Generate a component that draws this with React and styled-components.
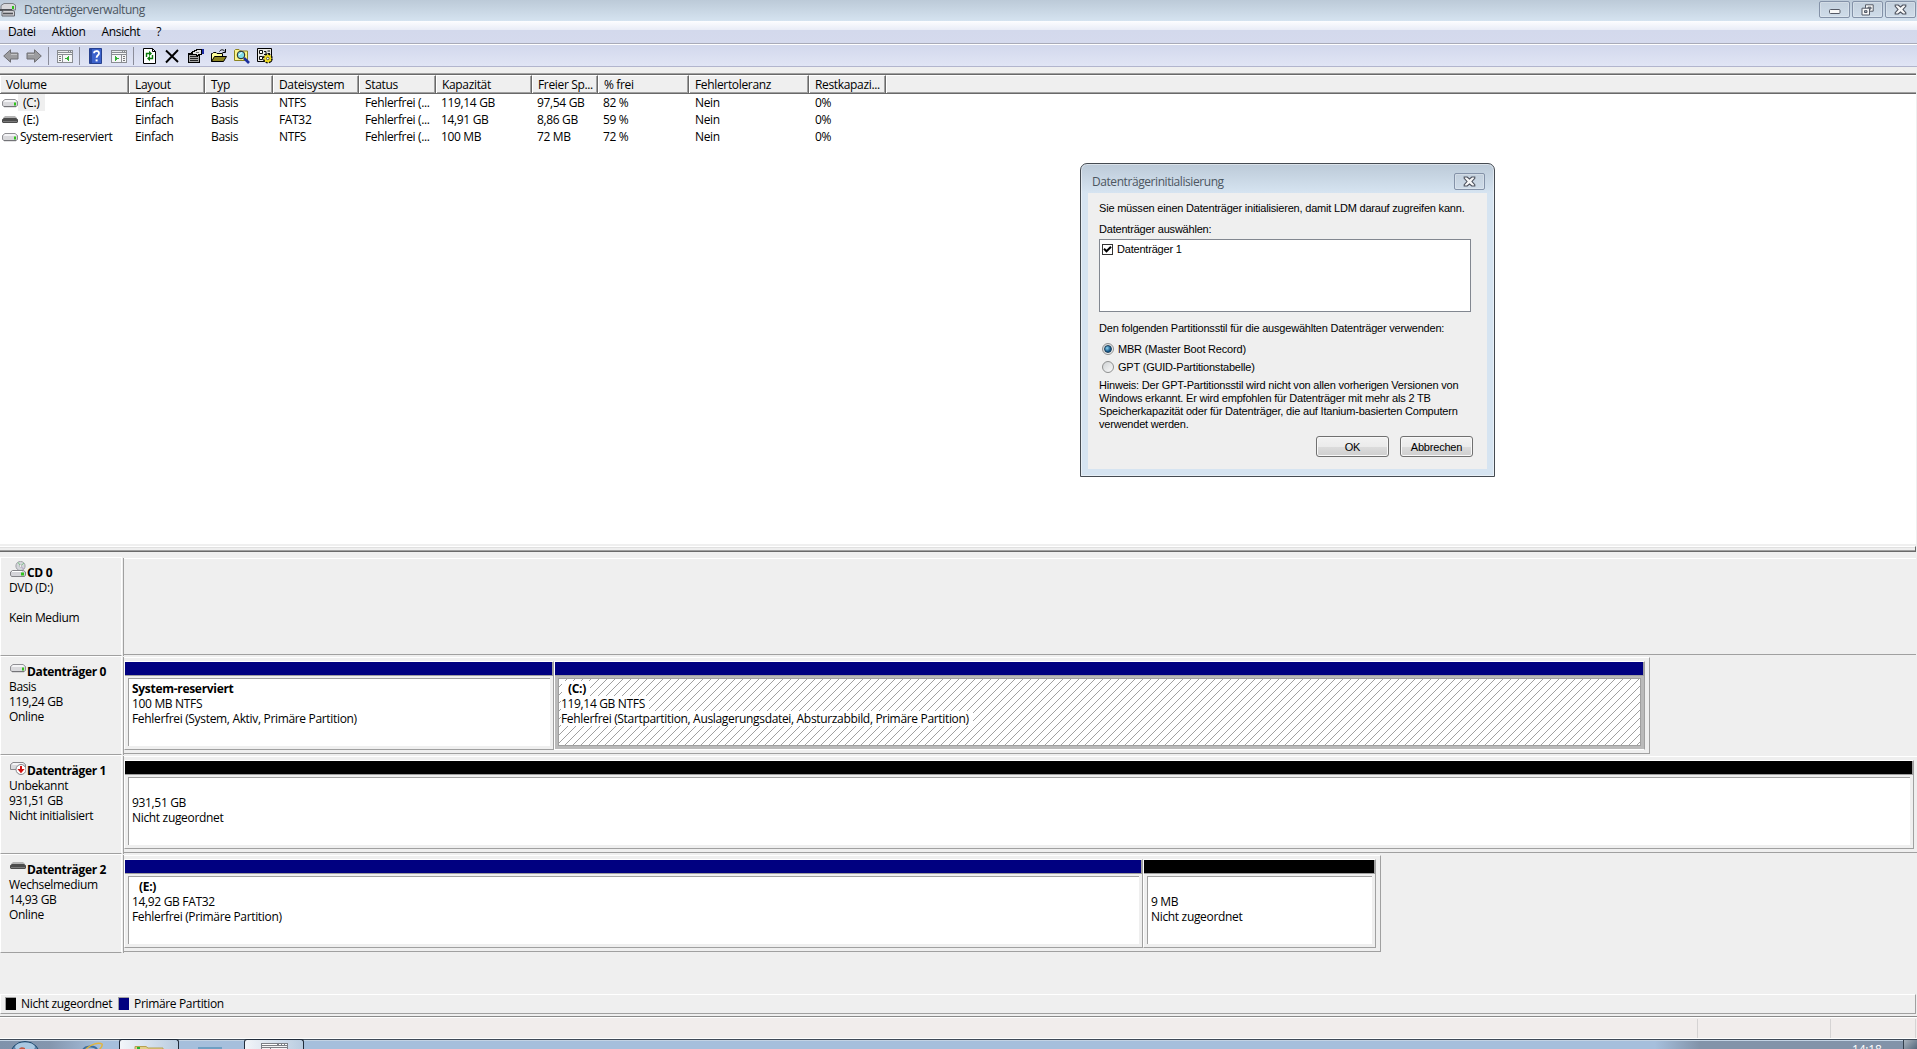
import React from "react";
import styled, { createGlobalStyle, css } from "styled-components";

const GlobalStyle = createGlobalStyle`
  * {
    box-sizing: border-box;
  }
  html, body {
    margin: 0;
    overflow: hidden;
  }
  body {
    font-family: "Open Sans", "Noto Sans", sans-serif;
    font-size: 12px;
    letter-spacing: -0.34px;
    color: #000;
    background: #efefef;
  }
  svg {
    display: block;
    flex-shrink: 0;
  }
`;

const Screen = styled.div`
  position: relative;
  width: 1917px;
  height: 1049px;
  display: flex;
  flex-direction: column;
  overflow: hidden;
  white-space: pre;
  background: #efefef;
`;

/* ---------- title bar, menu, toolbar ---------- */

const TitleBar = styled.div`
  height: 21px;
  display: flex;
  align-items: flex-start;
  background: linear-gradient(#bccad8, #d5e3f0);
`;

const TitleText = styled.span`
  flex: 1;
  margin-left: 8px;
  line-height: 20px;
  color: #4c5661;
  letter-spacing: -0.43px;
`;

const WindowButtons = styled.div`
  display: flex;
  gap: 2px;
  margin: 1px 1px 0 0;
`;

const WindowButton = styled.div`
  width: 31px;
  height: 17px;
  display: flex;
  align-items: center;
  justify-content: center;
  border: 1px solid #8492a8;
  border-radius: 2px;
  background: linear-gradient(#c3d0dd, #cfdce9);
  box-shadow: inset 0 0 0 1px rgba(255, 255, 255, 0.25);
`;

const MenuBar = styled.div`
  height: 24px;
  display: flex;
  gap: 16px;
  padding-left: 8px;
  line-height: 22px;
  border-bottom: 1px solid #fff;
  box-shadow: inset 0 -1px #a9abb8;
  background: linear-gradient(#fdfdff 0, #e9ecf7 9px, #d3d9ec 9px, #d5daed 100%);
`;

const ToolBar = styled.div`
  height: 22px;
  display: flex;
  align-items: center;
  padding-left: 3px;
  border-bottom: 1px solid #b2b5cd;
  background: linear-gradient(#d2d8ec, #e1e5f5);
`;

const ToolIcon = styled.div`
  width: 16px;
  height: 16px;
  margin-right: ${(p) => p.$gap}px;
`;

const Separator = styled.div`
  width: 1px;
  height: 18px;
  background: #8b8d9a;
  margin-right: ${(p) => p.$gap}px;
`;

/* ---------- volume list ---------- */

const VolumeList = styled.div`
  margin-top: 6px;
  width: 1916px;
  height: 471px;
  border-top: 1px solid #a0a0a0;
  box-shadow: inset 0 1px #696969;
  padding-top: 1px;
  background: #fff;
`;

const columns =
  "129px 76px 68px 86px 77px 96px 66px 91px 120px 77px 1fr";

const HeaderRow = styled.div`
  display: grid;
  grid-template-columns: ${columns};
  height: 19px;
  background: #efefef;
  border-bottom: 1px solid #696969;
  box-shadow: inset 0 -1px #a0a0a0;
`;

const HeaderCell = styled.div`
  padding-left: 5px;
  line-height: 17px;
  border-right: 1px solid #696969;
  border-top: 1px solid #fff;
  border-left: 1px solid #fff;
  box-shadow: inset -1px 0 #a0a0a0;
  overflow: hidden;
  &:last-child {
    border-right: 0;
    box-shadow: none;
  }
`;

const VolumeRow = styled.div`
  display: grid;
  grid-template-columns: ${columns};
  height: 17px;
  line-height: 17px;
`;

const VolumeCell = styled.div`
  padding-left: ${(p) => (p.$name ? 2 : p.$number ? 5 : 6)}px;
  display: flex;
  align-items: center;
`;

const VolumeName = styled.span`
  margin-left: 2px;
  height: 17px;
  ${(p) =>
    p.$letter &&
    css`
      padding: 0 6px 0 5px;
      margin-left: 0;
    `}
  background: ${(p) => (p.$selected ? "#efefef" : "transparent")};
`;

const Splitter = styled.div`
  width: 1916px;
  margin: 2px 0 5px;
  height: 6px;
  border-top: 1px solid #fff;
  border-bottom: 1px solid #696969;
  border-right: 1px solid #696969;
  box-shadow: inset 0 -1px #a0a0a0, inset 0 1px #e0e0e0;
`;

/* ---------- disks ---------- */

const DiskRow = styled.div`
  display: flex;
  width: 1916px;
  height: 99px;
`;

const DiskLabel = styled.div`
  width: 122px;
  padding: 7px 0 0 8px;
  line-height: 15px;
  border: 1px solid #fff;
  border-bottom-color: #a0a0a0;
`;

const DiskTitle = styled.div`
  display: flex;
  gap: 1px;
  margin-left: 1px;
  height: 15px;
  font-weight: 700;
  letter-spacing: -0.34px;
`;

const DiskIcon = styled.div`
  width: 16px;
  height: 16px;
  margin-top: -4px;
`;

const DiskArea = styled.div`
  width: 1794px;
  padding-left: 2px;
  display: flex;
`;

const Divider = styled.div`
  width: 1px;
  margin: 1px -2px 0 1px;
  background: #a0a0a0;
`;

const DiskFrame = styled.div`
  display: flex;
  margin: 1px 0 0;
  height: 97px;
  padding: 3px 4px 3px 0;
  border-top: 1px solid #fff;
  border-bottom: 1px solid #a0a0a0;
  border-right: ${(p) => (p.$open ? "0" : "1px solid #a0a0a0")};
  flex: ${(p) => (p.$open ? "1" : "none")};
`;

const Region = styled.div`
  width: ${(p) => p.$width}px;
  flex-shrink: 0;
  height: 89px;
  border: 1px solid #fff;
  border-right-color: #a0a0a0;
  border-bottom-color: ${(p) => (p.$selected ? "#fff" : "#a0a0a0")};
  background: ${(p) => (p.$selected ? "#bababa" : "#efefef")};
`;

const RegionBar = styled.div`
  height: 14px;
  border-right: 1px solid #a0a0a0;
  border-bottom: 1px solid #a0a0a0;
  background: ${(p) => p.$color};
`;

const RegionBox = styled.div`
  position: relative;
  height: 68px;
  margin: 2px 3px 3px;
  padding: 2px 0 0 ${(p) => (p.$selected ? 2 : 3)}px;
  line-height: 15px;
  background: #fff;
  border-top: 1px solid #a0a0a0;
  border-left: 1px solid #a0a0a0;
  ${(p) =>
    p.$selected &&
    css`
      border: 1px solid #a0a0a0;
    `}
`;

const RegionLine = styled.div`
  position: relative;
  width: max-content;
  height: 15px;
  padding-right: 4px;
  background: #fff;
  font-weight: ${(p) => (p.$bold ? 700 : 400)};
  letter-spacing: ${(p) => (p.$bold ? "-0.3px" : "-0.33px")};
  margin-left: ${(p) => (p.$indent ? 1 : 0)}px;
  padding-left: ${(p) => (p.$indent ? 6 : 0)}px;
`;

const HatchLayer = styled.svg`
  position: absolute;
  left: 0;
  top: 0;
  width: 100%;
  height: 100%;
`;

/* ---------- legend, status bar, taskbar ---------- */

const Legend = styled.div`
  margin-top: 41px;
  width: 1916px;
  height: 20px;
  display: flex;
  align-items: center;
  padding: 0 0 1px 4px;
  border: 1px solid #fff;
  border-right-color: #a0a0a0;
  border-bottom-color: #a0a0a0;
`;

const Swatch = styled.div`
  width: 11px;
  height: 13px;
  margin-right: 5px;
  border-top: 1px solid #a0a0a0;
  border-left: 1px solid #a0a0a0;
  background: ${(p) => p.$color};
`;

const LegendText = styled.span`
  width: ${(p) => p.$width}px;
`;

const StatusBar = styled.div`
  margin-top: 2px;
  height: 23px;
  display: flex;
  border-top: 1px solid #8a8a8a;
  border-bottom: 1px solid #fff;
  box-shadow: inset 0 1px #fff;
  background: #f1edec;
  padding-top: 2px;
`;

const StatusCell = styled.div`
  width: ${(p) => p.$width}px;
  border-right: 1px solid #d5d3d3;
`;

const TaskBar = styled.div`
  height: 10px;
  display: flex;
  border-top: 1px solid #3f4a58;
  box-shadow: inset 0 1px #c3d3e4;
  background: linear-gradient(
    90deg,
    #7f92ab 0,
    #8496ae 50px,
    #a6bfdc 100px,
    #a6bfdc 1655px,
    #8293a9 1700px
  );
`;

const TaskButton = styled.div`
  width: 60px;
  margin-right: ${(p) => p.$gap}px;
  margin-top: -1px;
  padding-top: ${(p) => p.$top}px;
  display: flex;
  justify-content: center;
  border: 1px solid #222c3a;
  border-bottom: 0;
  border-radius: 3px 3px 0 0;
  background: linear-gradient(90deg, #f2f5f9, #b9cce0);
`;

const TaskItem = styled.div`
  width: ${(p) => p.$width}px;
  height: 9px;
  padding-left: ${(p) => p.$left || 0}px;
  overflow: hidden;
`;

const TaskGlyph = styled.div`
  width: 24px;
  height: 2px;
  margin: 7px 22px 0 19px;
  background: #6f9fc2;
`;

const Clock = styled.div`
  width: 51px;
  height: 9px;
  margin-left: auto;
  overflow: hidden;
  color: #fff;
  line-height: 19px;
  letter-spacing: -0.2px;
`;

const ShowDesktop = styled.div`
  width: 14px;
  border: 1px solid #333e4c;
  border-width: 0 0 0 1px;
  background: linear-gradient(135deg, #a9b2bd, #56687d);
`;

/* ---------- dialog ---------- */

const Dialog = styled.div`
  position: absolute;
  left: 1080px;
  top: 163px;
  width: 415px;
  height: 314px;
  padding: 0 7px 7px;
  border: 1px solid #454b52;
  border-radius: 7px 7px 0 0;
  background: linear-gradient(#bccad8, #d6e4f1 29px);
  box-shadow: inset 0 0 0 1px rgba(255, 255, 255, 0.45);
`;

const DialogTitle = styled.div`
  height: 29px;
  display: flex;
  align-items: flex-start;
  padding: 9px 2px 0 0;
`;

const DialogTitleText = styled(TitleText)`
  margin: -1px 0 0 4px;
`;

const DialogBody = styled.div`
  height: 276px;
  padding: 8px 14px 0 11px;
  background: #efefef;
  font-family: "Liberation Sans", Arial, sans-serif;
  font-size: 11px;
  letter-spacing: -0.2px;
`;

const DialogText = styled.div`
  height: ${(p) => p.$height}px;
  line-height: ${(p) => p.$line || p.$height}px;
`;

const Note = styled(DialogText)`
  margin-top: 3px;
  height: 53px;
  line-height: 13px;
`;

const DiskSelect = styled.div`
  width: 372px;
  height: 73px;
  border: 1px solid #828790;
  background: #fff;
  padding: 3px 0 0 2px;
`;

const Option = styled.div`
  display: flex;
  align-items: center;
  gap: 4px;
  height: ${(p) => p.$height || 13}px;
`;

const CheckLabel = styled.span`
  margin-top: -2px;
`;

const CheckBox = styled.div`
  width: 11px;
  height: 11px;
  border: 1px solid #333;
  background: #fff;
`;

const RadioBox = styled.div`
  width: 12px;
  height: 12px;
  margin-left: 3px;
  border: 1px solid #8e8f8f;
  border-radius: 50%;
  display: flex;
  align-items: center;
  justify-content: center;
  background: linear-gradient(135deg, #cfd2d4, #fafafa);
`;

const RadioDot = styled.div`
  width: 8px;
  height: 8px;
  border-radius: 50%;
  border: 1px solid #1c3d58;
  background: radial-gradient(circle at 35% 35%, #8fd4f0, #14598c 60%);
`;

const Buttons = styled.div`
  display: flex;
  gap: 11px;
  margin: 4px 0 0 217px;
`;

const Button = styled.div`
  width: 73px;
  height: 21px;
  line-height: 20px;
  text-align: center;
  border: 1px solid #707070;
  border-radius: 3px;
  box-shadow: inset 0 0 0 1px #f8f8f8;
  background: linear-gradient(#f2f2f2 0, #ebebeb 50%, #dcdcdc 50%, #cfcfcf 100%);
`;

/* ---------- icons ---------- */

const Drive = ({ dark }) => (
  <svg width="16" height="16" viewBox="0 0 16 16">
    {dark ? (
      <>
        <path d="M3 4H13L15 6V8H1V6Z" fill="#b4b4b4" />
        <path d="M0 7.5L2 6H14L16 7.5V10L15 11H1L0 10Z" fill="#4c4c4c" />
        <path d="M1 9.5H15" stroke="#7a7a7a" />
      </>
    ) : (
      <>
        <path d="M3 4.5H13L15.5 6.5V10.5L14 11.5H2L.5 10.5V6.5Z" fill="#d9d9dc" stroke="#8f8f93" />
        <path d="M3 5H13L14.5 7H1.5Z" fill="#f4f4f6" />
        <path d="M2 11.7H14" stroke="#6d6d70" />
        <path d="M12 7.5h2v3h-2z" fill="#2fc21b" />
      </>
    )}
  </svg>
);

const CdDrive = () => (
  <svg width="16" height="17" viewBox="0 0 16 17">
    <circle cx="10.5" cy="5" r="4.6" fill="#d3d6da" stroke="#a2a2a8" />
    <path d="M10.5 5L8 1.3M10.5 5L14 2" stroke="#7fc48a" />
    <path d="M10.5 5L13.5 8" stroke="#b294c6" />
    <circle cx="10.5" cy="5" r="1.2" fill="#fff" stroke="#999" strokeWidth=".5" />
    <path d="M2.5 9.5H13.5L15.5 11V14L14.5 15.5H1.5L.5 14V11Z" fill="#d4d4d8" stroke="#838387" />
    <path d="M2 10.5H12" stroke="#fff" />
    <path d="M11 11.5h3v3h-3z" fill="#2fc21b" />
  </svg>
);

const ErrorDrive = () => (
  <svg width="16" height="17" viewBox="0 0 16 17">
    <path d="M3 3.5H13L15.5 5.5V10.5H.5V5.5Z" fill="#d9d9dc" stroke="#88888c" />
    <path d="M3 4H13L14 6H2Z" fill="#f4f4f6" />
    <circle cx="11" cy="10.5" r="5" fill="#fff" stroke="#85858a" />
    <path d="M10 7h2v3h2.6L11 14.2L7.4 10H10Z" fill="#d01010" />
  </svg>
);

const AppIcon = () => (
  <svg width="16" height="17" viewBox="0 0 16 17">
    <path d="M1 5.5L4 3.5H13L15.5 5V10H1Z" fill="#d8d8da" stroke="#7a7d82" />
    <path d="M0 9H12V11H0Z" fill="#4c4f53" />
    <path d="M2 11.5L4 10.5H13L14.5 11.5V16H2Z" fill="#d2d2d5" stroke="#64676c" />
    <path d="M3 13.5H13" stroke="#505357" strokeWidth="1.6" />
    <path d="M12 6h2v3h-2z" fill="#2fc21b" />
  </svg>
);

const Arrow = ({ right }) => (
  <svg width="16" height="16" viewBox="0 0 16 16">
    <path
      d="M.7 8L7.5 1.8V5H15V11H7.5V14.2Z"
      transform={right ? "translate(16 0) scale(-1 1)" : undefined}
      fill="#9c9c9f"
      stroke="#6e6e72"
      strokeLinejoin="round"
    />
    <path d={right ? "M2 6.5H8" : "M8 6.5H14"} stroke="#c4c4c6" />
  </svg>
);

const PaneIcon = ({ right }) => (
  <svg width="16" height="16" viewBox="0 0 16 16" shapeRendering="crispEdges">
    <path d="M0 2H16V15H0Z" fill="#8a8d92" />
    <path d="M1 5H15V6H1ZM1 7H15V14H1Z" fill="#f5f6f7" />
    <path d="M1 3H11V4H1ZM12 3h1v1h-1zM14 3h1v1h-1z" fill="#e8eaec" />
    <path d={right ? "M10 7h1v7h-1z" : "M5 7h1v7h-1z"} fill="#8a8d92" />
    {right ? (
      <>
        <path d="M12 8h2v1h-2zM12 10h2v1h-2zM12 12h2v1h-2z" fill="#777" />
        <path d="M4 8L8 10.5L4 13Z" fill="#35b135" />
      </>
    ) : (
      <>
        <path d="M2 8h2v1H2zM2 10h2v1H2zM2 12h2v1H2z" fill="#777" />
        <path d="M12 8L8 10.5L12 13Z" fill="#35b135" />
      </>
    )}
  </svg>
);

const HelpIcon = () => (
  <svg width="16" height="16" viewBox="0 0 16 16">
    <path d="M1.5 .5H13.5V15.5H1.5Z" fill="#3c62cc" stroke="#27418f" />
    <path d="M2 1H4V15H2Z" fill="#27469f" />
    <path d="M6 5.2C6 2.4 11 2.2 11 5.2C11 7.4 8.6 7.2 8.6 9.8" fill="none" stroke="#fff" strokeWidth="1.8" />
    <path d="M7.6 11.4h2v2h-2z" fill="#fff" />
  </svg>
);

const RefreshIcon = () => (
  <svg width="16" height="16" viewBox="0 0 16 16">
    <path d="M1.5 .5H10.5L13.5 3.5V15.5H1.5Z" fill="#fff" stroke="#000" />
    <path d="M10.5 .5V3.5H13.5" fill="none" stroke="#000" />
    <path d="M4.5 9V5.5H8" fill="none" stroke="#0a7a0a" strokeWidth="1.4" />
    <path d="M7 2.8L10 5.5L7 8.2Z" fill="#0a7a0a" />
    <path d="M10.5 7V10.5H7" fill="none" stroke="#0a7a0a" strokeWidth="1.4" />
    <path d="M8 7.8L5 10.5L8 13.2Z" fill="#0a7a0a" />
  </svg>
);

const DeleteIcon = () => (
  <svg width="16" height="16" viewBox="0 0 16 16">
    <path d="M1 2.5L13 14M13 2L1 14.5" stroke="#000" strokeWidth="1.9" />
  </svg>
);

const PropertiesIcon = () => (
  <svg width="16" height="16" viewBox="0 0 16 16" shapeRendering="crispEdges">
    <path d="M0 5H12V15H0Z" fill="#000" />
    <path d="M1 7H11V14H1Z" fill="#a5a5a5" />
    <path d="M2 8h8v1H2zM2 10h8v1H2zM2 12h8v1H2z" fill="#222" />
    <path d="M3 4L7 2L9 1H14V7H11L9 9L7 7H5L3 6Z" fill="#000" />
    <path d="M5 4L8 3H9V2H13V6H10L9 7L8 6H5Z" fill="#e4e4e4" />
    <path d="M8 4h3v1H8z" fill="#777" />
    <path d="M14 1h2v5h-2z" fill="#1c2ca8" />
  </svg>
);

const FolderIcon = () => (
  <svg width="16" height="16" viewBox="0 0 16 16">
    <path d="M.5 13.5V5.5H1.5L2.5 4.5H5L6 5.5H11.5V8" fill="#ffff9a" stroke="#000" />
    <path d="M.5 13.5L3.5 8.5H15.5L12.5 13.5Z" fill="#8c8420" stroke="#000" />
    <path d="M8.5 3.5C10 1 12.5 1.5 14 3.5M14.5 1V4.5H11.5" fill="none" stroke="#000" />
  </svg>
);

const SearchIcon = () => (
  <svg width="16" height="16" viewBox="0 0 16 16">
    <path d="M.5 12.5V2.5L1.5 1.5H5L6.5 3H13.5V12.5Z" fill="#fbf58c" stroke="#8c8420" />
    <circle cx="7" cy="7" r="3.8" fill="#7fdde8" stroke="#222" />
    <path d="M5 7L8 4.5" stroke="#fff" />
    <path d="M10 10L15 15" stroke="#1b2f9e" strokeWidth="2.6" />
  </svg>
);

const SettingsIcon = () => (
  <svg width="16" height="16" viewBox="0 0 16 16">
    <path d="M.5 .5H14.5V13.5H.5Z" fill="#e9e9e4" stroke="#000" />
    <path d="M2.5 2.5h3v3h-3zM2.5 8.5h3v3h-3z" fill="#fff" stroke="#111" />
    <path d="M7 3.5H9V6.5H7M10.5 3H13M10.5 5.5H13" fill="none" stroke="#111" />
    <circle cx="10.8" cy="10.5" r="4.2" fill="#f2df25" stroke="#111" strokeDasharray="2 1.3" strokeWidth="1.6" />
    <circle cx="10.8" cy="10.5" r="3.3" fill="#f2df25" />
    <circle cx="10.8" cy="10.5" r="1.3" fill="#fff" stroke="#333" strokeWidth=".8" />
  </svg>
);

const MinimizeGlyph = () => (
  <svg width="12" height="12" viewBox="0 0 12 12">
    <rect x=".5" y="5.5" width="10.5" height="4" rx="1" fill="#f8f8f8" stroke="#555a66" />
  </svg>
);

const RestoreGlyph = () => (
  <svg width="13" height="12" viewBox="0 0 13 12">
    <path d="M4.5 .8H12.2V7.2H4.5Z" fill="#f8f8f8" stroke="#555a66" />
    <path d="M7 3.2H10V5H7Z" fill="#aab6c5" stroke="#555a66" />
    <path d="M1 4.2H8.5V11H1Z" fill="#f8f8f8" stroke="#555a66" />
    <path d="M3.5 6.7H6V8.5H3.5Z" fill="#aab6c5" stroke="#555a66" />
  </svg>
);

const CloseGlyph = () => (
  <svg width="13" height="11" viewBox="0 0 13 11">
    <path
      d="M1.2 1H4.2L6.5 3L8.8 1H11.8V2.4L9 5.5L11.8 8.6V10H8.8L6.5 8L4.2 10H1.2V8.6L4 5.5L1.2 2.4Z"
      fill="#f8f8f8"
      stroke="#4c515d"
      strokeWidth="1.1"
    />
  </svg>
);

const CheckMark = () => (
  <svg width="9" height="9" viewBox="0 0 9 9">
    <path d="M1 3.8L3.5 6.3L8 1.8" fill="none" stroke="#000" strokeWidth="2" />
  </svg>
);

const StartOrb = () => (
  <svg width="34" height="9" viewBox="0 0 34 9">
    <circle cx="17" cy="17" r="15.5" fill="#5f86ac" stroke="#1f4a6e" />
    <ellipse cx="17" cy="7" rx="10" ry="4.5" fill="#a9c8e2" />
    <path d="M11 9C12 7 15 7 17 8V9Z" fill="#c45a44" />
  </svg>
);

const BrowserIcon = () => (
  <svg width="26" height="9" viewBox="0 0 26 9">
    <path d="M3 10C5 6 14 5 17 9" fill="none" stroke="#3d6f9f" strokeWidth="2" />
    <path d="M6 9C11 4 19 2 22 4C23 6 21 8 19 10" fill="none" stroke="#e3b53c" strokeWidth="1.5" />
  </svg>
);

const ExplorerIcon = () => (
  <svg width="30" height="5" viewBox="0 0 30 5">
    <path d="M1 .5H12L14 2H29V6H1Z" fill="#e2cf86" stroke="#b7a051" />
    <path d="M3 1h3v3H3z" fill="#27b52e" />
  </svg>
);

const ConsoleIcon = () => (
  <svg width="27" height="7" viewBox="0 0 27 7" shapeRendering="crispEdges">
    <path d="M0 0H27V7H0Z" fill="#7c8086" />
    <path d="M1 3H26V4H1ZM1 5H9V7H1ZM10 5H26V7H10Z" fill="#f3f4f5" />
    <path d="M1 1h15v1H1zM18 1h2v1h-2zM21 1h2v1h-2zM24 1h2v1h-2z" fill="#fff" />
  </svg>
);

const Hatch = () => (
  <HatchLayer shapeRendering="crispEdges">
    <defs>
      <pattern id="hatch" width="8" height="8" patternUnits="userSpaceOnUse">
        {[0, 1, 2, 3, 4, 5, 6, 7].map((i) => (
          <rect key={i} x={i} y={7 - i} width="1" height="1" fill="#a0a0a0" />
        ))}
      </pattern>
    </defs>
    <rect width="100%" height="100%" fill="url(#hatch)" />
  </HatchLayer>
);

/* ---------- data ---------- */

const headers = [
  "Volume",
  "Layout",
  "Typ",
  "Dateisystem",
  "Status",
  "Kapazität",
  "Freier Sp...",
  "% frei",
  "Fehlertoleranz",
  "Restkapazi...",
  "",
];

const volumes = [
  {
    name: "(C:)",
    letter: true,
    selected: true,
    cells: ["Einfach", "Basis", "NTFS", "Fehlerfrei (...", "119,14 GB", "97,54 GB", "82 %", "Nein", "0%"],
  },
  {
    name: "(E:)",
    letter: true,
    dark: true,
    cells: ["Einfach", "Basis", "FAT32", "Fehlerfrei (...", "14,91 GB", "8,86 GB", "59 %", "Nein", "0%"],
  },
  {
    name: "System-reserviert",
    cells: ["Einfach", "Basis", "NTFS", "Fehlerfrei (...", "100 MB", "72 MB", "72 %", "Nein", "0%"],
  },
];

const NAVY = "#000080";
const BLACK = "#000";

const disks = [
  { title: "CD 0", icon: <CdDrive />, lines: ["DVD (D:)", "", "Kein Medium"], regions: [] },
  {
    title: "Datenträger 0",
    icon: <Drive />,
    lines: ["Basis", "119,24 GB", "Online"],
    regions: [
      {
        width: 430,
        color: NAVY,
        title: "System-reserviert",
        lines: ["100 MB NTFS", "Fehlerfrei (System, Aktiv, Primäre Partition)"],
      },
      {
        width: 1091,
        color: NAVY,
        selected: true,
        indent: true,
        title: "(C:)",
        lines: [
          "119,14 GB NTFS",
          "Fehlerfrei (Startpartition, Auslagerungsdatei, Absturzabbild, Primäre Partition)",
        ],
      },
    ],
  },
  {
    title: "Datenträger 1",
    icon: <ErrorDrive />,
    open: true,
    lines: ["Unbekannt", "931,51 GB", "Nicht initialisiert"],
    regions: [{ width: 1790, color: BLACK, title: "", lines: ["931,51 GB", "Nicht zugeordnet"] }],
  },
  {
    title: "Datenträger 2",
    icon: <Drive dark />,
    lines: ["Wechselmedium", "14,93 GB", "Online"],
    regions: [
      {
        width: 1019,
        color: NAVY,
        indent: true,
        title: "(E:)",
        lines: ["14,92 GB FAT32", "Fehlerfrei (Primäre Partition)"],
      },
      { width: 233, color: BLACK, title: "", lines: ["9 MB", "Nicht zugeordnet"] },
    ],
  },
];

function Disk({ disk }) {
  const empty = disk.regions.length === 0;
  return (
    <DiskRow>
      <DiskLabel>
        <DiskTitle>
          <DiskIcon>{disk.icon}</DiskIcon>
          {disk.title}
        </DiskTitle>
        {disk.lines.map((line, i) => (
          <div key={i}>{line || " "}</div>
        ))}
      </DiskLabel>
      <Divider />
      <DiskArea>
        <DiskFrame $open={empty || disk.open}>
          {disk.regions.map((region, i) => (
            <Region key={i} $width={region.width} $selected={region.selected}>
              <RegionBar $color={region.color} />
              <RegionBox $selected={region.selected}>
                {region.selected && <Hatch />}
                <RegionLine $bold $indent={region.indent}>
                  {region.title}
                </RegionLine>
                {region.lines.map((line) => (
                  <RegionLine key={line}>{line}</RegionLine>
                ))}
              </RegionBox>
            </Region>
          ))}
        </DiskFrame>
      </DiskArea>
    </DiskRow>
  );
}

function InitDialog() {
  return (
    <Dialog>
      <DialogTitle>
        <DialogTitleText>Datenträgerinitialisierung</DialogTitleText>
        <WindowButton>
          <CloseGlyph />
        </WindowButton>
      </DialogTitle>
      <DialogBody>
        <DialogText $height={15}>
          Sie müssen einen Datenträger initialisieren, damit LDM darauf zugreifen kann.
        </DialogText>
        <DialogText $height={23} $line={27}>
          Datenträger auswählen:
        </DialogText>
        <DiskSelect>
          <Option>
            <CheckBox>
              <CheckMark />
            </CheckBox>
            <CheckLabel>Datenträger 1</CheckLabel>
          </Option>
        </DiskSelect>
        <DialogText $height={28} $line={32}>
          Den folgenden Partitionsstil für die ausgewählten Datenträger verwenden:
        </DialogText>
        <Option $height={18}>
          <RadioBox>
            <RadioDot />
          </RadioBox>
          MBR (Master Boot Record)
        </Option>
        <Option $height={18}>
          <RadioBox />
          GPT (GUID-Partitionstabelle)
        </Option>
        <Note>
          {`Hinweis: Der GPT-Partitionsstil wird nicht von allen vorherigen Versionen von
Windows erkannt. Er wird empfohlen für Datenträger mit mehr als 2 TB
Speicherkapazität oder für Datenträger, die auf Itanium-basierten Computern
verwendet werden.`}
        </Note>
        <Buttons>
          <Button>OK</Button>
          <Button>Abbrechen</Button>
        </Buttons>
      </DialogBody>
    </Dialog>
  );
}

export default function App() {
  return (
    <Screen>
      <GlobalStyle />
      <TitleBar>
        <AppIcon />
        <TitleText>Datenträgerverwaltung</TitleText>
        <WindowButtons>
          <WindowButton>
            <MinimizeGlyph />
          </WindowButton>
          <WindowButton>
            <RestoreGlyph />
          </WindowButton>
          <WindowButton>
            <CloseGlyph />
          </WindowButton>
        </WindowButtons>
      </TitleBar>
      <MenuBar>
        <span>Datei</span>
        <span>Aktion</span>
        <span>Ansicht</span>
        <span>?</span>
      </MenuBar>
      <ToolBar>
        <ToolIcon $gap={7}><Arrow /></ToolIcon>
        <ToolIcon $gap={6}><Arrow right /></ToolIcon>
        <Separator $gap={8} />
        <ToolIcon $gap={6}><PaneIcon /></ToolIcon>
        <Separator $gap={8} />
        <ToolIcon $gap={7}><HelpIcon /></ToolIcon>
        <ToolIcon $gap={6}><PaneIcon right /></ToolIcon>
        <Separator $gap={8} />
        <ToolIcon $gap={7}><RefreshIcon /></ToolIcon>
        <ToolIcon $gap={7}><DeleteIcon /></ToolIcon>
        <ToolIcon $gap={7}><PropertiesIcon /></ToolIcon>
        <ToolIcon $gap={7}><FolderIcon /></ToolIcon>
        <ToolIcon $gap={7}><SearchIcon /></ToolIcon>
        <ToolIcon $gap={0}><SettingsIcon /></ToolIcon>
      </ToolBar>
      <VolumeList>
        <HeaderRow>
          {headers.map((header) => (
            <HeaderCell key={header}>{header}</HeaderCell>
          ))}
        </HeaderRow>
        {volumes.map((volume) => (
          <VolumeRow key={volume.name}>
            <VolumeCell $name>
              <Drive dark={volume.dark} />
              <VolumeName $letter={volume.letter} $selected={volume.selected}>
                {volume.name}
              </VolumeName>
            </VolumeCell>
            {volume.cells.map((cell, i) => (
              <VolumeCell key={i} $number={/^\d.* /.test(cell)}>
                {cell}
              </VolumeCell>
            ))}
          </VolumeRow>
        ))}
      </VolumeList>
      <Splitter />
      {disks.map((disk) => (
        <Disk key={disk.title} disk={disk} />
      ))}
      <Legend>
        <Swatch $color={BLACK} />
        <LegendText $width={97}>Nicht zugeordnet</LegendText>
        <Swatch $color={NAVY} />
        <LegendText $width={100}>Primäre Partition</LegendText>
      </Legend>
      <StatusBar>
        <StatusCell $width={1698} />
        <StatusCell $width={133} />
        <StatusCell $width={85} />
      </StatusBar>
      <TaskBar>
        <TaskItem $width={80} $left={8}>
          <StartOrb />
        </TaskItem>
        <TaskItem $width={39}>
          <BrowserIcon />
        </TaskItem>
        <TaskButton $gap={0} $top={6}>
          <ExplorerIcon />
        </TaskButton>
        <TaskGlyph />
        <TaskButton $gap={0} $top={3}>
          <ConsoleIcon />
        </TaskButton>
        <Clock>14:18</Clock>
        <ShowDesktop />
      </TaskBar>
      <InitDialog />
    </Screen>
  );
}
